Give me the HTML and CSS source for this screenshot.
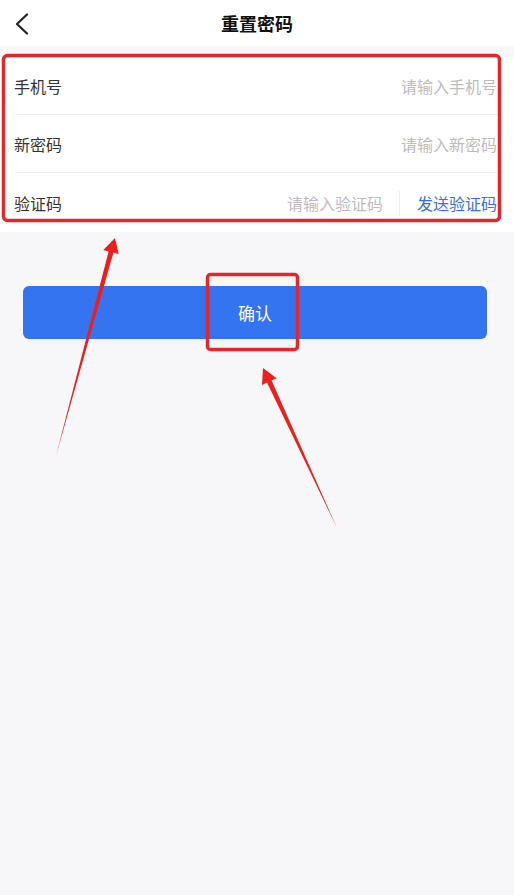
FILE: index.html
```html
<!DOCTYPE html>
<html lang="zh">
<head>
<meta charset="utf-8">
<title>重置密码</title>
<link rel="stylesheet" href="styles.css">
</head>
<body>
<div class="page">
  <header class="nav">
    <svg class="back" width="14" height="22" viewBox="0 0 14 22"><path d="M12 1.5 L2 11 L12 20.5" fill="none" stroke="#222" stroke-width="2.2" stroke-linecap="round" stroke-linejoin="round"/></svg>
    <h1 class="title">重置密码</h1>
  </header>
  <div class="gap"></div>
  <section class="form">
    <div class="row">
      <span class="label">手机号</span>
      <span class="ph">请输入手机号</span>
    </div>
    <div class="row">
      <span class="label">新密码</span>
      <span class="ph">请输入新密码</span>
    </div>
    <div class="row last">
      <span class="label">验证码</span>
      <span class="ph code">请输入验证码</span>
      <span class="divider"></span>
      <span class="send">发送验证码</span>
    </div>
  </section>
  <div class="actions">
    <button class="confirm">确认</button>
  </div>
  <svg class="marks" width="514" height="895" viewBox="0 0 514 895">
    <rect x="3.5" y="55.5" width="496" height="165" rx="4" fill="none" stroke="#e0272a" stroke-width="3.5"/>
    <rect x="207.5" y="274.5" width="90" height="75" rx="3" fill="none" stroke="#e0272a" stroke-width="3.5"/>
    <polygon points="115,238 118.7,254 113.4,252.6 56,456 108.6,251.4 103.3,250" fill="#ec1f1c"/>
    <polygon points="263,368 276.6,378.2 271.6,380.5 337,528 267,382.6 262,385" fill="#ec1f1c"/>
  </svg>
</div>
</body>
</html>
```
FILE: styles.css
```css
* { box-sizing: border-box; }
html, body { margin: 0; padding: 0; }
body {
  background: #f7f7f9;
  font-family: "Noto Sans CJK SC", "Noto Sans", sans-serif;
  color: #333;
}
.page {
  position: relative;
  width: 514px;
  min-height: 895px;
}
.nav {
  height: 46px;
  background: #fff;
  display: flex;
  align-items: center;
  justify-content: center;
  position: relative;
}
.back {
  position: absolute;
  left: 15px;
  top: 13px;
}
.title {
  margin: 0;
  font-size: 18px;
  font-weight: 700;
  color: #111;
  line-height: 1;
}
.gap { height: 11px; }
.form {
  background: #fff;
  padding: 0 15px 1px 15px;
}
.row {
  height: 58px;
  display: flex;
  align-items: center;
  border-bottom: 1px solid #efefef;
  padding-right: 2px;
  padding-top: 1px;
  font-size: 16px;
}
.row.last { border-bottom: none; padding-top: 2px; }
.label {
  color: #333;
  margin-left: -1px;
  flex: 1;
}
.ph { color: #bcbcc0; }
.divider {
  width: 1px;
  height: 25px;
  background: #ececec;
  margin: 0 17px 0 16px;
}
.send { color: #3b6fd4; }
.actions {
  padding: 54px 27px 0 23px;
}
.confirm {
  width: 100%;
  height: 53px;
  border: none;
  border-radius: 6px;
  background: #3574f1;
  color: #fff;
  font-family: "Noto Sans CJK SC", sans-serif;
  font-size: 17px;
}
.marks {
  position: absolute;
  left: 0;
  top: 0;
  pointer-events: none;
}
```
